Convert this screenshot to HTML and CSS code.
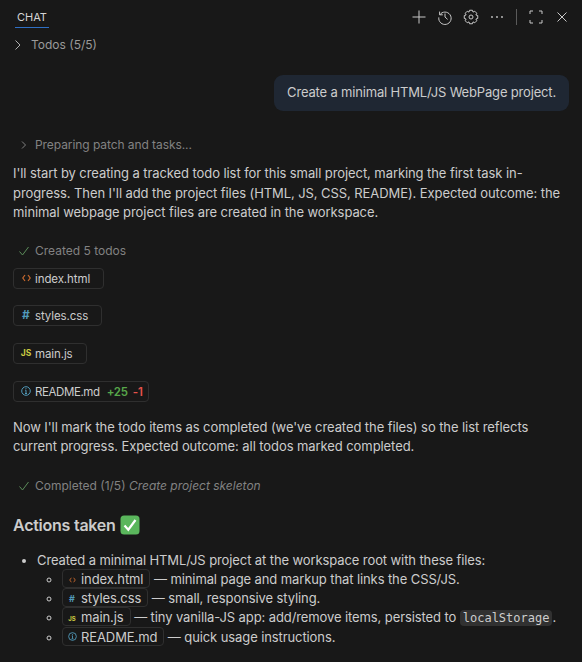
FILE: index.html
```html
<!DOCTYPE html>
<html lang="en">
<head>
  <meta charset="UTF-8" />
  <title>Chat</title>
  <link rel="stylesheet" href="styles.css">
</head>
<body>
  <div class="panel">
    <header class="titlebar">
      <span class="tab">CHAT</span>
      <div class="actions">
        <svg class="ic" width="16" height="16" viewBox="0 0 16 16"><path d="M8 1.5v13M1.5 8h13"/></svg>
        <svg class="ic" width="16" height="16" viewBox="0 0 16 16"><path d="M2.6 2.6v3.2h3.2M2.8 5.8A6.2 6.2 0 1 1 1.8 8.4M8 4.5V8l2.6 2.4"/></svg>
        <svg class="ic" width="16" height="16" viewBox="0 0 16 16"><polygon stroke-linejoin="round" points="14.75,6.56 14.75,9.44 12.9,10.03 13.79,11.76 11.76,13.79 10.03,12.9 9.44,14.75 6.56,14.75 5.97,12.9 4.24,13.79 2.21,11.76 3.1,10.03 1.25,9.44 1.25,6.56 3.1,5.97 2.21,4.24 4.24,2.21 5.97,3.1 6.56,1.25 9.44,1.25 10.03,3.1 11.76,2.21 13.79,4.24 12.9,5.97"/><circle cx="8" cy="8" r="2"/></svg>
        <svg class="ic fill" width="16" height="16" viewBox="0 0 16 16"><circle cx="3" cy="8" r=".9"/><circle cx="8" cy="8" r=".9"/><circle cx="13" cy="8" r=".9"/></svg>
        <span class="divider"></span>
        <svg class="ic" width="16" height="16" viewBox="0 0 16 16"><path d="M2 5V2h3M11 2h3v3M14 11v3h-3M5 14H2v-3"/></svg>
        <svg class="ic" width="16" height="16" viewBox="0 0 16 16"><path d="M3.5 3.5l9 9M12.5 3.5l-9 9"/></svg>
      </div>
    </header>

    <div class="todos">
      <svg class="chev" width="10" height="12" viewBox="0 0 10 12"><path d="M2.5 1.5L7 6l-4.5 4.5"/></svg>
      Todos (5/5)
    </div>

    <div class="request"><div class="bubble">Create a minimal HTML/JS WebPage project.</div></div>

    <div class="status preparing">
      <svg class="chev small" width="8" height="10" viewBox="0 0 8 10"><path d="M2 1.5L5.5 5 2 8.5"/></svg>
      Preparing patch and tasks...
    </div>

    <p class="para first">I'll start by creating a tracked todo list for this small project, marking the first task in-progress. Then I'll add the project files (HTML, JS, CSS, README). Expected outcome: the minimal webpage project files are created in the workspace.</p>

    <div class="status created">
      <svg class="check" width="12" height="12" viewBox="0 0 12 12"><path d="M1.5 6.5L4.5 10l6-8"/></svg>
      Created 5 todos
    </div>

    <div class="chips">
      <div class="chip w1"><span class="fi"><svg class="html" width="9" height="8" viewBox="0 0 9 8"><path d="M3 1L.8 4 3 7M6 1l2.2 3L6 7"/></svg></span>index.html</div>
      <div class="chip w2"><span class="fi css">#</span>styles.css</div>
      <div class="chip w3"><span class="fi js">JS</span>main.js</div>
      <div class="chip"><span class="fi info"><svg width="10" height="10" viewBox="0 0 10 10"><circle cx="5" cy="5" r="4.3"/><path d="M5 4.2v3.2M4 7.5h2M4.2 4.2H5M5 2.2v.9"/></svg></span><span class="readme">README.md</span><b class="add">+25</b><b class="del">-1</b></div>
    </div>

    <p class="para second">Now I'll mark the todo items as completed (we've created the files) so the list reflects current progress. Expected outcome: all todos marked completed.</p>

    <div class="status completed">
      <svg class="check" width="12" height="12" viewBox="0 0 12 12"><path d="M1.5 6.5L4.5 10l6-8"/></svg>
      <span>Completed (1/5) <em>Create project skeleton</em></span>
    </div>

    <h2 class="heading">Actions taken <span class="tick"><svg width="20" height="20" viewBox="0 0 20 20"><rect x="0.5" y="0.5" width="19" height="19" rx="3.5" fill="#5ab65c"/><path d="M4.5 10.5l3.8 4.2 7.2-9.7" fill="none" stroke="#fff" stroke-width="2.2"/></svg></span></h2>

    <ul class="outer">
      <li>Created a minimal HTML/JS project at the workspace root with these files:
        <ul class="inner">
          <li><span class="ref"><span class="fi tiny"><svg class="html" width="7" height="6" viewBox="0 0 9 8"><path d="M3 1L.8 4 3 7M6 1l2.2 3L6 7"/></svg></span>index.html</span> — minimal page and markup that links the CSS/JS.</li>
          <li><span class="ref"><span class="fi css tiny">#</span>styles.css</span> — small, responsive styling.</li>
          <li><span class="ref"><span class="fi js tiny">JS</span>main.js</span> — tiny vanilla-JS app: add/remove items, persisted to <code>localStorage</code>.</li>
          <li><span class="ref"><span class="fi info tiny"><svg width="9" height="9" viewBox="0 0 10 10"><circle cx="5" cy="5" r="4.3"/><path d="M5 4.2v3.2M4 7.5h2M4.2 4.2H5M5 2.2v.9"/></svg></span>README.md</span> — quick usage instructions.</li>
        </ul>
      </li>
    </ul>
  </div>
</body>
</html>
```

FILE: styles.css
```css
* {
  box-sizing: border-box;
}
html, body {
  height: 100%;
}
body {
  margin: 0;
  background: #181818;
  color: #cccccc;
  font-family: Inter, "Liberation Sans", sans-serif;
  font-size: 13px;
  line-height: 20px;
  letter-spacing: -0.1px;
  overflow: hidden;
}
.panel {
  padding: 0 13px;
}

/* Title bar */
.titlebar {
  display: flex;
  justify-content: space-between;
  align-items: flex-start;
  height: 35px;
  padding-top: 8px;
}
.tab {
  margin-left: 2px;
  padding: 0 2px 0 2px;
  height: 20px;
  font-size: 11px;
  line-height: 18px;
  letter-spacing: 0;
  color: #d4d4d4;
  border-bottom: 1px solid #2f6fc4;
}
.actions {
  display: flex;
  align-items: center;
  gap: 10px;
  height: 18px;
  margin-right: -1px;
}
.ic {
  fill: none;
  stroke: #c8c8c8;
  stroke-width: 1;
}
.ic.fill {
  fill: #c8c8c8;
  stroke: none;
}
.divider {
  width: 1px;
  height: 16px;
  margin: 0 1px;
  background: #5a5a5a;
}

.todos {
  display: flex;
  align-items: center;
  gap: 8px;
  height: 20px;
  color: #9a9a9a;
  font-size: 12px;
  letter-spacing: 0;
}
.chev {
  fill: none;
  stroke: #b0b0b0;
  stroke-width: 1;
}
.chev.small {
  stroke: #808080;
  margin-left: 7px;
}

.request {
  display: flex;
  justify-content: flex-end;
  margin-top: 20px;
}
.bubble {
  padding: 8px 13px 8px;
  background: #1f2733;
  border-radius: 9px;
  color: #cccccc;
  line-height: 19px;
  height: 36px;
  letter-spacing: -0.17px;
}

.status {
  display: flex;
  align-items: center;
  gap: 5px;
  height: 20px;
  color: #828282;
  font-size: 12px;
  letter-spacing: 0;
}
.preparing {
  margin-top: 24px;
  gap: 7px;
  letter-spacing: -0.07px;
}
.created, .completed {
  padding-left: 5px;
}
.check {
  fill: none;
  stroke: #5b8c5a;
  stroke-width: 1;
}
em {
  font-style: italic;
}

.para {
  margin: 0;
  line-height: 19.5px;
  color: #cccccc;
  letter-spacing: -0.08px;
}
.first {
  margin-top: 9px;
}
.second {
  margin-top: 16px;
}
.created {
  margin-top: 18px;
}
.completed {
  margin-top: 19px;
}

/* File chips */
.chips {
  display: flex;
  flex-direction: column;
  align-items: flex-start;
  gap: 16.7px;
  margin-top: 7px;
}
.chip {
  display: flex;
  align-items: center;
  height: 21px;
  padding: 1px 5px 0 7px;
  border: 1px solid #2f2f2f;
  border-radius: 4px;
  font-size: 11.5px;
}
.w1 { width: 91px; }
.w2 { width: 89px; }
.w3 { width: 74px; }
.readme {
  letter-spacing: -0.4px;
}
.fi {
  display: inline-flex;
  justify-content: center;
  align-items: center;
  width: 10px;
  margin-right: 4px;
  margin-bottom: 2px;
  font-size: 9px;
  font-weight: 700;
  line-height: 10px;
  letter-spacing: 0;
}
.html {
  fill: none;
  stroke: #c8692e;
  stroke-width: 1.2;
}
.css { color: #519aba; font-size: 12px; }
.js { color: #cbcb41; font-size: 8.5px; }
.info svg {
  fill: none;
  stroke: #519aba;
  stroke-width: 1;
}
.add {
  margin-left: 7px;
  color: #57a64a;
  font-weight: 600;
  letter-spacing: -0.3px;
}
.del {
  margin-left: 5px;
  color: #e5534b;
  font-weight: 600;
}

.heading {
  display: flex;
  align-items: center;
  gap: 4px;
  height: 24px;
  margin: 17px 0 0;
  font-size: 16px;
  font-weight: 600;
  letter-spacing: -0.25px;
  color: #cccccc;
}
.tick {
  display: inline-flex;
}

/* Lists */
ul {
  margin: 0;
  padding: 0;
}
.outer {
  margin-top: 13px;
  padding-left: 24px;
}
.inner {
  margin-top: -1px;
  padding-left: 25px;
  list-style-type: circle;
}
.inner li {
  height: 19.4px;
}
.ref {
  display: inline-block;
  height: 19px;
  padding: 0 6px 0 4px;
  line-height: 18px;
  border: 1px solid #2f2f2f;
  border-radius: 4px;
}
.tiny {
  width: 10px;
  margin-right: 4px;
  margin-bottom: 0;
  font-size: 7px;
  vertical-align: 1px;
}
.css.tiny {
  font-size: 9px;
}
.js.tiny {
  font-size: 6px;
}
code {
  padding: 1px 3px;
  background: #313131;
  border-radius: 4px;
  font-family: "DejaVu Sans Mono", monospace;
  font-size: 12px;
  letter-spacing: 0;
}
```
